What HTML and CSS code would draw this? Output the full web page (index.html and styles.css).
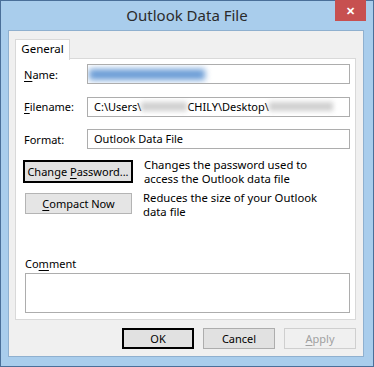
FILE: index.html
```html
<!DOCTYPE html>
<html lang="en">
<head>
  <meta charset="UTF-8" />
  <title>Outlook Data File</title>
  <link rel="stylesheet" href="styles.css">
</head>
<body>
  <div class="window">
    <div class="titlebar">
      <span class="title">Outlook Data File</span>
      <span class="close">&#x2715;</span>
    </div>

    <div class="dialog">
      <div class="tabs">
        <span class="tab">General</span>
      </div>

      <div class="panel">
        <div class="field">
          <label><u>N</u>ame:</label>
          <div class="input"><span class="blur blue"></span></div>
        </div>
        <div class="field">
          <label><u>F</u>ilename:</label>
          <div class="input">C:\Users\<span class="blur gray w1"></span>CHILY\Desktop\<span class="blur gray w2"></span></div>
        </div>
        <div class="field">
          <label>Format:</label>
          <div class="input">Outlook Data File</div>
        </div>

        <div class="action first">
          <button class="btn default">Change <u>P</u>assword...</button>
          <p>Changes the password used to<br>access the Outlook data file</p>
        </div>
        <div class="action second">
          <button class="btn compact"><u>C</u>ompact Now</button>
          <p>Reduces the size of your Outlook<br>data file</p>
        </div>

        <div class="comment">
          <label>Co<u>m</u>ment</label>
          <div class="textarea"></div>
        </div>
      </div>

      <div class="buttons">
        <button class="btn default ok">OK</button>
        <button class="btn">Cancel</button>
        <button class="btn disabled"><u>A</u>pply</button>
      </div>
    </div>
  </div>
</body>
</html>
```

FILE: styles.css
```css
body {
  margin: 0;
  font-family: 'Segoe UI', 'Noto Sans', sans-serif;
  font-size: 11px;
  color: #000;
  background: #fff;
}

u {
  text-decoration-thickness: 1px;
  text-underline-offset: 2px;
}

.window {
  width: 374px;
  height: 367px;
  box-sizing: border-box;
  border: 1px solid #4a6f99;
  background: #a9cdec;
  display: flex;
  flex-direction: column;
}

.titlebar {
  height: 29px;
  flex-shrink: 0;
  position: relative;
  display: flex;
  justify-content: center;
  align-items: center;
}

.title {
  font-size: 15px;
  color: #2b2b2b;
  margin-top: -2px;
}

.close {
  position: absolute;
  top: -1px;
  right: 7px;
  width: 31px;
  height: 21px;
  background: #c75050;
  color: #fff;
  font-size: 11px;
  font-weight: bold;
  display: flex;
  align-items: center;
  justify-content: center;
}

.dialog {
  margin: 0 9px 9px 7px;
  flex: 1;
  background: #f0f0f0;
  border: 1px solid #8fb0cf;
  padding: 8px 7px 0 6px;
  display: flex;
  flex-direction: column;
}

.tabs {
  display: flex;
  height: 19px;
  flex-shrink: 0;
}

.tab {
  width: 53px;
  border: 1px solid #d9d9d9;
  border-bottom: none;
  background: #fff;
  text-align: center;
  line-height: 18px;
  font-size: 11.5px;
  position: relative;
  z-index: 1;
  height: 20px;
}

.panel {
  height: 262px;
  flex-shrink: 0;
  box-sizing: border-box;
  border: 1px solid #d9d9d9;
  background: #fff;
  padding: 5px 5px 0 8px;
}

.field {
  display: flex;
  align-items: center;
  height: 20px;
  margin-bottom: 12.5px;
}

.field label {
  width: 63px;
}

.input {
  flex: 1;
  height: 20px;
  box-sizing: border-box;
  border: 1px solid #adadad;
  padding: 0 6px;
  line-height: 18px;
  white-space: nowrap;
  overflow: hidden;
  display: flex;
  align-items: center;
}

.blur {
  display: inline-block;
  height: 9px;
  filter: blur(2.5px);
}

.blur.blue {
  width: 116px;
  height: 11px;
  background: #6a9cd6;
  margin-left: -5px;
  filter: blur(3px);
}

.blur.gray {
  background: #d0d0d0;
}

.w1 { width: 46px; }
.w2 { width: 64px; }

.btn {
  font-family: inherit;
  font-size: 11px;
  color: #000;
  background: #e1e1e1;
  border: 1px solid #adadad;
  padding: 0;
  height: 21px;
  width: 72px;
  white-space: nowrap;
}

.btn.default {
  border: 2px solid #000;
}

.btn.disabled {
  color: #a0a0a0;
  background: #f0f0f0;
  border-color: #cfcfcf;
}

.action {
  display: flex;
  align-items: flex-start;
}

.action.first {
  height: 23px;
  margin-top: -2px;
}

.action.second {
  height: 21px;
  margin-top: 10px;
}

.action p {
  margin: -2px 0 0 11px;
  line-height: 14px;
  font-size: 11.3px;
}

.action .btn {
  width: 110px;
  height: 23px;
  margin-left: -1px;
}

.action .btn.compact {
  width: 107px;
  height: 21px;
  margin-left: 1px;
  background: #e5e5e5;
  border-color: #b4b4b4;
}

.comment {
  margin-top: 43px;
  margin-left: 1px;
}

.comment label {
  display: block;
  line-height: 14px;
}

.textarea {
  margin-top: 2px;
  height: 40px;
  box-sizing: border-box;
  border: 1px solid #adadad;
}

.buttons {
  display: flex;
  justify-content: flex-end;
  gap: 9px;
  margin-top: 8px;
}
```
